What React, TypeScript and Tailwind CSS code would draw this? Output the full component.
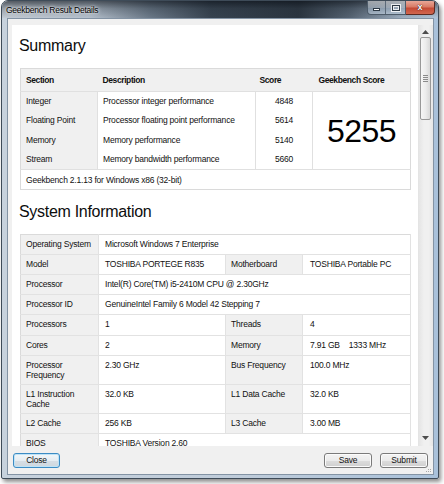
import React from "react";

type SysRow = {
  h: string;
  cells: { text: React.ReactNode; label?: boolean; span?: number }[];
};

const sysRows: SysRow[] = [
  { h: "h-[20px]", cells: [{ text: "Operating System", label: true }, { text: "Microsoft Windows 7 Enterprise", span: 3 }] },
  {
    h: "h-[20px]",
    cells: [
      { text: "Model", label: true },
      { text: "TOSHIBA PORTEGE R835" },
      { text: "Motherboard", label: true },
      { text: "TOSHIBA Portable PC" },
    ],
  },
  { h: "h-[20px]", cells: [{ text: "Processor", label: true }, { text: "Intel(R) Core(TM) i5-2410M CPU @ 2.30GHz", span: 3 }] },
  { h: "h-[20px]", cells: [{ text: "Processor ID", label: true }, { text: "GenuineIntel Family 6 Model 42 Stepping 7", span: 3 }] },
  {
    h: "h-[21px]",
    cells: [{ text: "Processors", label: true }, { text: "1" }, { text: "Threads", label: true }, { text: "4" }],
  },
  {
    h: "h-[20px]",
    cells: [
      { text: "Cores", label: true },
      { text: "2" },
      { text: "Memory", label: true },
      {
        text: (
          <>
            7.91 GB<span className="ml-[9px]">1333 MHz</span>
          </>
        ),
      },
    ],
  },
  {
    h: "h-[29px]",
    cells: [
      { text: "Processor\nFrequency", label: true },
      { text: "2.30 GHz" },
      { text: "Bus Frequency", label: true },
      { text: "100.0 MHz" },
    ],
  },
  {
    h: "h-[29px]",
    cells: [
      { text: "L1 Instruction\nCache", label: true },
      { text: "32.0 KB" },
      { text: "L1 Data Cache", label: true },
      { text: "32.0 KB" },
    ],
  },
  {
    h: "h-[20px]",
    cells: [{ text: "L2 Cache", label: true }, { text: "256 KB" }, { text: "L3 Cache", label: true }, { text: "3.00 MB" }],
  },
  { h: "h-[20px]", cells: [{ text: "BIOS", label: true }, { text: "TOSHIBA Version 2.60", span: 3 }] },
];

const sections = [
  { name: "Integer", desc: "Processor integer performance", score: "4848" },
  { name: "Floating Point", desc: "Processor floating point performance", score: "5614" },
  { name: "Memory", desc: "Memory performance", score: "5140" },
  { name: "Stream", desc: "Memory bandwidth performance", score: "5660" },
];

function WinButton({ label, focused, w }: { label: string; focused?: boolean; w: string }) {
  return (
    <button
      className={`${w} h-[15px] rounded-[3px] border text-[8.5px] tracking-[-0.2px] text-[#111] leading-none ${
        focused
          ? "border-[#3c8cc4] bg-[linear-gradient(180deg,#f2f7fa_0%,#e6edf2_50%,#d6dee5_51%,#cfd8df_100%)] shadow-[inset_0_0_0_1px_#bfe3f7]"
          : "border-[#7a7a7a] bg-[linear-gradient(180deg,#f3f3f3_0%,#ebebeb_50%,#dddddd_51%,#cfcfcf_100%)] shadow-[inset_0_0_0_1px_#fbfbfb]"
      }`}
    >
      {label}
    </button>
  );
}

function Heading({ children }: { children: React.ReactNode }) {
  return (
    <h2 className="ml-[-1px] h-[20px] text-[16px] leading-[20px] tracking-[-0.3px] text-[#0d0d0d]">{children}</h2>
  );
}

export default function App() {
  return (
    <div className="w-[444px] h-[484px] bg-white overflow-hidden font-['Liberation_Sans',Arial,sans-serif]">
      {/* window */}
      <div className="ml-[1px] w-[438px] h-[479px] rounded-t-[7px] rounded-b-[2px] border border-[#3e4b58] bg-[linear-gradient(90deg,#c7d2dd_0%,#bfccda_55%,#a9c1da_100%)] shadow-[2px_3px_4px_rgba(0,0,0,0.45)] flex flex-col overflow-hidden">
        {/* title bar */}
        <div className="h-[17px] shrink-0 flex items-start bg-[linear-gradient(180deg,rgba(10,15,22,0.6)_0%,rgba(40,50,60,0.3)_45%,rgba(190,205,220,0)_100%),linear-gradient(90deg,#c4ccd5_0%,#b6c1cd_20%,#6a7887_34%,#36424f_48%,#2a343f_68%,#566473_80%,#9fb0c2_92%,#b2c5d8_100%)]">
          <span className="pl-[4px] pt-[4px] text-[8.5px] leading-[10px] tracking-[-0.25px] text-[#000] [text-shadow:0_0_4px_rgba(255,255,255,0.9),0_0_2px_rgba(255,255,255,0.9)]">
            Geekbench Result Details
          </span>
          <div className="ml-auto mr-[3px] flex">
            <div className="flex h-[14px] rounded-bl-[4px] border border-t-0 border-[#4e5c6a] bg-[linear-gradient(180deg,rgba(255,255,255,0.55)_0%,rgba(220,230,240,0.45)_50%,rgba(170,190,210,0.5)_51%,rgba(200,215,230,0.6)_100%)]">
              <div className="w-[18px] flex items-end justify-center pb-[3px] border-r border-[#5b6978]">
                <div className="w-[7px] h-[3px] bg-white border border-[#2e3a46]" />
              </div>
              <div className="w-[19px] flex items-center justify-center">
                <div className="w-[8px] h-[6px] border border-[#2e3a46] bg-transparent shadow-[0_0_0_1px_rgba(255,255,255,0.8),inset_0_0_0_1px_rgba(255,255,255,0.8)]" />
              </div>
            </div>
            <div className="w-[29px] h-[14px] rounded-br-[4px] border border-l-0 border-t-0 border-[#5c2a22] bg-[linear-gradient(180deg,#e8a797_0%,#d97b66_45%,#c44a35_55%,#d1674f_100%)] flex items-center justify-center">
              <span className="text-[9px] leading-none font-bold text-white [text-shadow:0_0_1px_#3a1510,0_0_1px_#3a1510]">x</span>
            </div>
          </div>
        </div>

        {/* client */}
        <div className="ml-[5px] mr-[4px] mb-[3px] flex-1 min-h-0 border border-[#8393a4] bg-[#f0f0f0] flex flex-col">
          <div className="pl-[4px] pt-[6px] flex shrink-0">
            {/* scroll content */}
            <div className="w-[406px] h-[421px] bg-white overflow-hidden px-[8px] pt-[11px] text-[#111]">
              <Heading>Summary</Heading>
              <table className="mt-[12px] w-[390px] table-fixed border-collapse border border-[#dadada] text-[8.5px] leading-[10px] tracking-[-0.2px]">
                <colgroup>
                  <col className="w-[77px]" />
                  <col className="w-[158px]" />
                  <col className="w-[57px]" />
                  <col className="w-[98px]" />
                </colgroup>
                <thead>
                  <tr className="h-[23px] bg-[#f0f0f0] border-b border-[#e0e0e0]">
                    <th className="text-left font-bold tracking-[-0.4px] pl-[5px]">Section</th>
                    <th className="text-left font-bold tracking-[-0.4px] pl-[5px]">Description</th>
                    <th className="text-left font-bold tracking-[-0.4px] pl-[4px]">Score</th>
                    <th className="text-left font-bold tracking-[-0.4px] pl-[6px]">Geekbench Score</th>
                  </tr>
                </thead>
                <tbody>
                  {sections.map((s, i) => (
                    <tr key={s.name} className="h-[19.5px]">
                      <td className="bg-[#f0f0f0] border-r border-[#e0e0e0] pl-[5px] align-top pt-[4px]">{s.name}</td>
                      <td className="border-r border-[#e0e0e0] pl-[5px] align-top pt-[4px]">{s.desc}</td>
                      <td className="border-r border-[#e0e0e0] text-center align-top pt-[4px]">{s.score}</td>
                      {i === 0 && (
                        <td rowSpan={4} className="text-center align-middle text-[32px] leading-none tracking-[-0.5px] text-black">
                          5255
                        </td>
                      )}
                    </tr>
                  ))}
                  <tr className="h-[20px] border-t border-[#e0e0e0]">
                    <td colSpan={4} className="pl-[5px]">
                      Geekbench 2.1.13 for Windows x86 (32-bit)
                    </td>
                  </tr>
                </tbody>
              </table>

              <div className="mt-[12px]">
                <Heading>System Information</Heading>
              </div>
              <table className="mt-[12px] w-[390px] table-fixed border-collapse border border-[#dadada] text-[8.5px] leading-[9.5px] tracking-[-0.2px]">
                <colgroup>
                  <col className="w-[78px]" />
                  <col className="w-[127px]" />
                  <col className="w-[77px]" />
                  <col className="w-[108px]" />
                </colgroup>
                <tbody>
                  {sysRows.map((r, i) => (
                    <tr key={i} className={`${r.h} border-b border-[#e2e2e2]`}>
                      {r.cells.map((c, j) => (
                        <td
                          key={j}
                          colSpan={c.span}
                          className={`align-top pt-[5px] whitespace-pre-line border-r border-[#e2e2e2] ${
                            c.label ? "bg-[#f0f0f0] pl-[5px]" : j === 1 ? "pl-[6px]" : "pl-[7px]"
                          }`}
                        >
                          {c.text}
                        </td>
                      ))}
                    </tr>
                  ))}
                </tbody>
              </table>
            </div>

            {/* scrollbar */}
            <div className="w-[15px] h-[421px] bg-[linear-gradient(90deg,#e3e3e3,#f0f0f0_40%,#f0f0f0_70%,#e6e6e6)] flex flex-col items-center">
              <div className="h-[12px] flex items-center justify-center pt-[2px]">
                <svg width="7" height="4" viewBox="0 0 7 4">
                  <path d="M0 4 L3.5 0 L7 4 Z" fill="#4d4d4d" />
                </svg>
              </div>
              <div className="w-[11px] h-[83px] rounded-[2px] border border-[#989898] bg-[linear-gradient(90deg,#f6f6f6,#ececec_50%,#d8d8d8)] flex flex-col items-center justify-center gap-[1px]">
                <div className="w-[5px] h-[1px] bg-[#8a8a8a]" />
                <div className="w-[5px] h-[1px] bg-[#8a8a8a]" />
                <div className="w-[5px] h-[1px] bg-[#8a8a8a]" />
                <div className="w-[5px] h-[1px] bg-[#8a8a8a]" />
              </div>
              <div className="flex-1" />
              <div className="h-[12px] flex items-center justify-center pb-[4px]">
                <svg width="7" height="4" viewBox="0 0 7 4">
                  <path d="M0 0 L7 0 L3.5 4 Z" fill="#4d4d4d" />
                </svg>
              </div>
            </div>
          </div>

          {/* buttons */}
          <div className="mt-[7px] px-[5px] flex justify-between items-start shrink-0">
            <WinButton label="Close" focused w="w-[47px]" />
            <div className="flex gap-[8px]">
              <WinButton label="Save" w="w-[48px]" />
              <WinButton label="Submit" w="w-[48px]" />
            </div>
          </div>
          <div className="flex-1 min-h-0 overflow-hidden flex justify-end items-end pr-[1px] pb-[1px]">
            <svg width="6" height="6" viewBox="0 0 6 6">
              <rect x="4" y="0" width="1" height="1" fill="#a8a8a8" />
              <rect x="2" y="2" width="1" height="1" fill="#a8a8a8" />
              <rect x="4" y="2" width="1" height="1" fill="#a8a8a8" />
              <rect x="0" y="4" width="1" height="1" fill="#a8a8a8" />
              <rect x="2" y="4" width="1" height="1" fill="#a8a8a8" />
              <rect x="4" y="4" width="1" height="1" fill="#a8a8a8" />
            </svg>
          </div>
        </div>
      </div>
    </div>
  );
}
